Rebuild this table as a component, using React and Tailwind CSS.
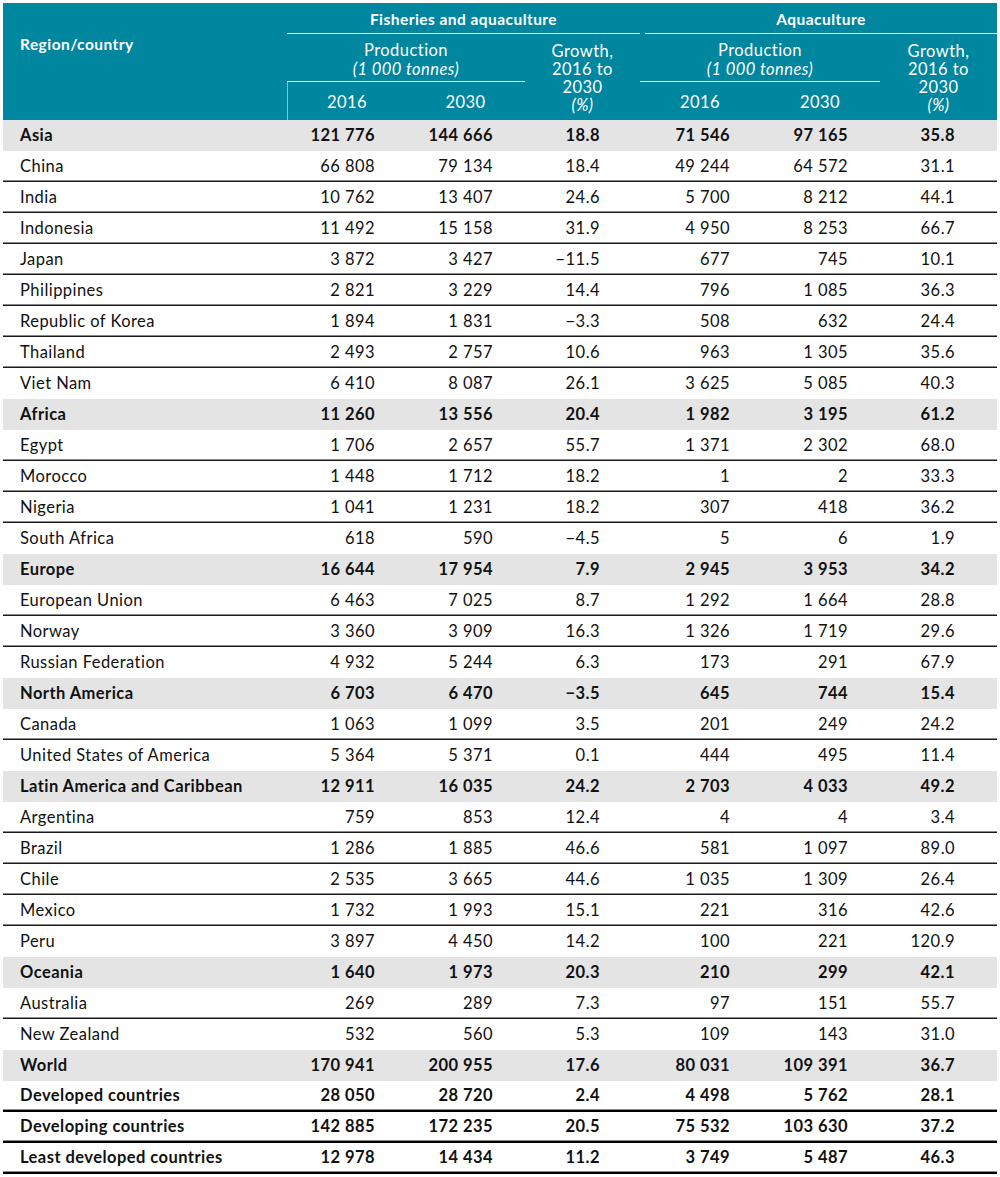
const ROWS = [
  ["Asia", "121 776", "144 666", "18.8", "71 546", "97 165", "35.8", "region"],
  ["China", "66 808", "79 134", "18.4", "49 244", "64 572", "31.1", "country"],
  ["India", "10 762", "13 407", "24.6", "5 700", "8 212", "44.1", "country"],
  ["Indonesia", "11 492", "15 158", "31.9", "4 950", "8 253", "66.7", "country"],
  ["Japan", "3 872", "3 427", "\u221211.5", "677", "745", "10.1", "country"],
  ["Philippines", "2 821", "3 229", "14.4", "796", "1 085", "36.3", "country"],
  ["Republic of Korea", "1 894", "1 831", "\u22123.3", "508", "632", "24.4", "country"],
  ["Thailand", "2 493", "2 757", "10.6", "963", "1 305", "35.6", "country"],
  ["Viet Nam", "6 410", "8 087", "26.1", "3 625", "5 085", "40.3", "country"],
  ["Africa", "11 260", "13 556", "20.4", "1 982", "3 195", "61.2", "region"],
  ["Egypt", "1 706", "2 657", "55.7", "1 371", "2 302", "68.0", "country"],
  ["Morocco", "1 448", "1 712", "18.2", "1", "2", "33.3", "country"],
  ["Nigeria", "1 041", "1 231", "18.2", "307", "418", "36.2", "country"],
  ["South Africa", "618", "590", "\u22124.5", "5", "6", "1.9", "country"],
  ["Europe", "16 644", "17 954", "7.9", "2 945", "3 953", "34.2", "region"],
  ["European Union", "6 463", "7 025", "8.7", "1 292", "1 664", "28.8", "country"],
  ["Norway", "3 360", "3 909", "16.3", "1 326", "1 719", "29.6", "country"],
  ["Russian Federation", "4 932", "5 244", "6.3", "173", "291", "67.9", "country"],
  ["North America", "6 703", "6 470", "\u22123.5", "645", "744", "15.4", "region"],
  ["Canada", "1 063", "1 099", "3.5", "201", "249", "24.2", "country"],
  ["United States of America", "5 364", "5 371", "0.1", "444", "495", "11.4", "country"],
  ["Latin America and Caribbean", "12 911", "16 035", "24.2", "2 703", "4 033", "49.2", "region"],
  ["Argentina", "759", "853", "12.4", "4", "4", "3.4", "country"],
  ["Brazil", "1 286", "1 885", "46.6", "581", "1 097", "89.0", "country"],
  ["Chile", "2 535", "3 665", "44.6", "1 035", "1 309", "26.4", "country"],
  ["Mexico", "1 732", "1 993", "15.1", "221", "316", "42.6", "country"],
  ["Peru", "3 897", "4 450", "14.2", "100", "221", "120.9", "country"],
  ["Oceania", "1 640", "1 973", "20.3", "210", "299", "42.1", "region"],
  ["Australia", "269", "289", "7.3", "97", "151", "55.7", "country"],
  ["New Zealand", "532", "560", "5.3", "109", "143", "31.0", "country"],
  ["World", "170 941", "200 955", "17.6", "80 031", "109 391", "36.7", "region"],
  ["Developed countries", "28 050", "28 720", "2.4", "4 498", "5 762", "28.1", "total"],
  ["Developing countries", "142 885", "172 235", "20.5", "75 532", "103 630", "37.2", "total"],
  ["Least developed countries", "12 978", "14 434", "11.2", "3 749", "5 487", "46.3", "total"],
];

const GRID = "grid grid-cols-[284px_119px_119px_115px_120px_120px_117px]";
const PADS = ["pr-[31px]", "pr-[32px]", "pr-[40px]", "pr-[30px]", "pr-[32px]", "pr-[42px]"];

const Header = () => (
  <div className={`${GRID} grid-rows-[31px_48px_38px] bg-[#00869f] text-white text-[16.5px]`}>
    <div className="row-span-3 pl-[17px] pt-[32px] font-bold text-[15.5px] leading-[18px]">
      Region/country
    </div>
    <div className="col-span-3 flex items-center justify-center pt-[4px] border-b border-white font-bold text-[15.5px]">
      Fisheries and aquaculture
    </div>
    <div className="col-span-3 ml-[5px] flex items-center justify-center pt-[4px] border-b border-white font-bold text-[15.5px]">
      Aquaculture
    </div>
    <div className="col-span-2 pt-[7px] text-center leading-[19px] border-b border-white">
      <div>Production</div>
      <div className="italic">(1 000 tonnes)</div>
    </div>
    <div className="row-span-2 pt-[8px] text-center leading-[18px]">
      <div>Growth,</div>
      <div>2016 to</div>
      <div>2030</div>
      <div className="italic">(%)</div>
    </div>
    <div className="col-span-2 pt-[7px] text-center leading-[19px] border-b border-white">
      <div>Production</div>
      <div className="italic">(1 000 tonnes)</div>
    </div>
    <div className="row-span-2 pt-[8px] text-center leading-[18px]">
      <div>Growth,</div>
      <div>2016 to</div>
      <div>2030</div>
      <div className="italic">(%)</div>
    </div>
    <div className="flex items-center justify-center pt-[3px] border-l border-white/50">2016</div>
    <div className="flex items-center justify-center pt-[3px]">2030</div>
    <div className="flex items-center justify-center pt-[3px]">2016</div>
    <div className="flex items-center justify-center pt-[3px]">2030</div>
  </div>
);

const Row = ({ row, ruled }) => {
  const type = row[7];
  const vals = row.slice(1, 7);
  const bold = type !== "country";
  let box = "h-[31px]";
  if (type === "region") box = "h-[31px] bg-[#e4e4e4]";
  if (type === "total") box = "h-[31px] border-b-2 border-black shadow-[inset_0_-1px_0_#8a8a8a]";
  if (ruled) box = "h-[31px] border-b border-[#1a1a1a] shadow-[inset_0_-1px_0_#8a8a8a]";
  return (
    <div className={`${GRID} items-center ${box} ${bold ? "font-bold" : ""}`}>
      <div className="pl-[17px]">{row[0]}</div>
      {vals.map((v, i) => (
        <div key={i} className={`text-right ${PADS[i]}`}>
          {v}
        </div>
      ))}
    </div>
  );
};

export default function App() {
  return (
    <div className="bg-white min-h-[1177px] pt-[3px] pl-[3px]">
      <div
        className="w-[994px] text-[16.5px] tracking-[0.45px] text-[#111]"
        style={{ fontFamily: "Lato, 'Noto Sans', sans-serif" }}
      >
        <Header />
        {ROWS.map((r, i) => {
          const next = ROWS[i + 1];
          const ruled = r[7] === "country" && next !== undefined && next[7] === "country";
          return <Row key={r[0]} row={r} ruled={ruled} />;
        })}
      </div>
    </div>
  );
}
